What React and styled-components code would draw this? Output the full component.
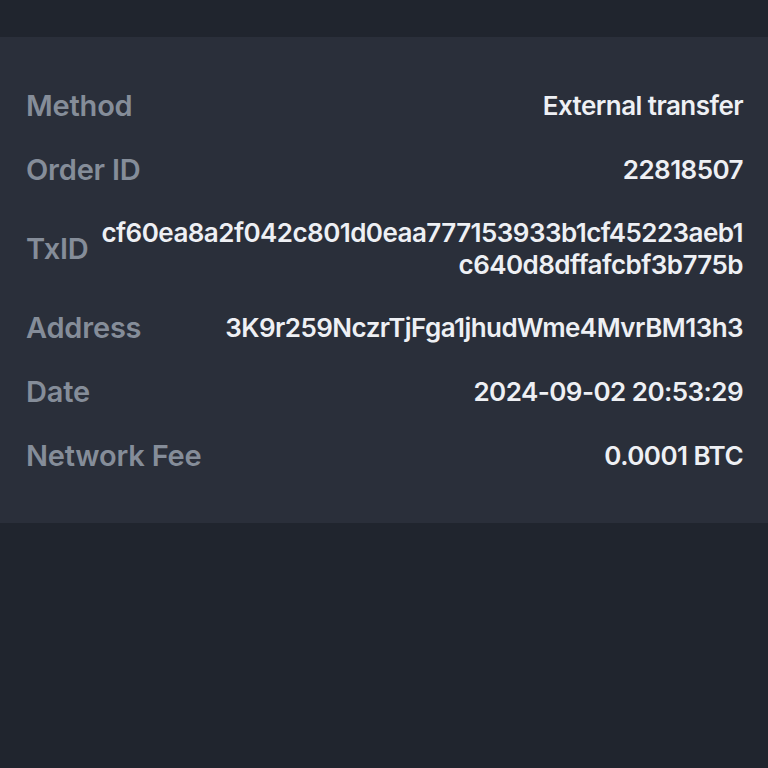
import React from 'react'
import styled, { createGlobalStyle } from 'styled-components'

const Global = createGlobalStyle`
  html, body {
    margin: 0;
    padding: 0;
    background: #20252e;
    font-family: Inter, "Noto Sans", sans-serif;
  }
`

const Page = styled.div`
  min-height: 768px;
  padding-top: 37px;
  background: #20252e;
`

const Card = styled.div`
  background: #2a2f3a;
  padding: 52px 25px 50px 26px;
  display: flex;
  flex-direction: column;
  gap: 30px;
`

const Row = styled.div`
  display: flex;
  justify-content: space-between;
  align-items: center;
  gap: 12px;
  min-height: 34px;
`

const Label = styled.div`
  color: #858d99;
  font-size: 29px;
  font-weight: 600;
  line-height: 34px;
  letter-spacing: -0.2px;
  white-space: nowrap;
`

const Value = styled.div`
  color: #eef0f4;
  font-size: 26px;
  font-weight: 600;
  line-height: 32px;
  letter-spacing: -0.55px;
  text-align: right;
  white-space: pre-line;
`

const rows = [
  ['Method', 'External transfer'],
  ['Order ID', '22818507'],
  ['TxID', 'cf60ea8a2f042c801d0eaa777153933b1cf45223aeb1\nc640d8dffafcbf3b775b'],
  ['Address', '3K9r259NczrTjFga1jhudWme4MvrBM13h3'],
  ['Date', '2024-09-02 20:53:29'],
  ['Network Fee', '0.0001 BTC'],
]

export default function App() {
  return (
    <Page>
      <Global />
      <Card>
        {rows.map(([k, v]) => (
          <Row key={k}>
            <Label>{k}</Label>
            <Value>{v}</Value>
          </Row>
        ))}
      </Card>
    </Page>
  )
}
